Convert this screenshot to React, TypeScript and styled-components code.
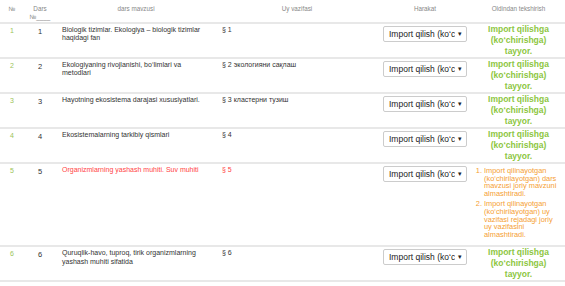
import { createGlobalStyle, styled } from "styled-components";

const GlobalStyle = createGlobalStyle`
  body {
    margin: 0;
    background: #fff;
    font-family: "Liberation Sans", Arial, sans-serif;
  }
`;

type Row = {
  id: number;
  topic: string;
  homework: string;
  warn?: boolean;
};

const rows: Row[] = [
  { id: 1, topic: "Biologik tizimlar. Ekologiya – biologik tizimlar haqidagi fan", homework: "§ 1" },
  { id: 2, topic: "Ekologiyaning rivojlanishi, bo‘limlari va metodlari", homework: "§ 2 экологияни сақлаш" },
  { id: 3, topic: "Hayotning ekosistema darajasi xususiyatlari.", homework: "§ 3 кластерни тузиш" },
  { id: 4, topic: "Ekosistemalarning tarkibiy qismlari", homework: "§ 4" },
  { id: 5, topic: "Organizmlarning yashash muhiti. Suv muhiti", homework: "§ 5", warn: true },
  { id: 6, topic: "Quruqlik-havo, tuproq, tirik organizmlarning yashash muhiti sifatida", homework: "§ 6" },
];

const App = () => {
  return (
    <>
      <GlobalStyle />
      <Table>
        <colgroup>
          <col style={{ width: 24 }} />
          <col style={{ width: 32 }} />
          <col style={{ width: 160 }} />
          <col style={{ width: 162 }} />
          <col style={{ width: 94 }} />
          <col style={{ width: 93 }} />
        </colgroup>
        <thead>
          <tr>
            <Th>№</Th>
            <Th>
              Dars
              <br />
              №____
            </Th>
            <Th>dars mavzusi</Th>
            <Th>Uy vazifasi</Th>
            <Th>Harakat</Th>
            <Th>Oldindan tekshirish</Th>
          </tr>
        </thead>
        <tbody>
          {rows.map((r) => (
            <tr key={r.id}>
              <NumCell>{r.id}</NumCell>
              <DarsCell>{r.id}</DarsCell>
              <TextCell $red={r.warn}>{r.topic}</TextCell>
              <TextCell $red={r.warn}>{r.homework}</TextCell>
              <ActionCell>
                <FakeSelect>
                  <SelectText>Import qilish (ko‘chirish)</SelectText>
                  <Arrow>▾</Arrow>
                </FakeSelect>
              </ActionCell>
              <CheckCell>
                {r.warn ? (
                  <WarnList>
                    <li>
                      Import qilinayotgan (ko‘chirilayotgan) dars mavzusi joriy
                      mavzuni almashtiradi.
                    </li>
                    <li>
                      Import qilinayotgan (ko‘chirilayotgan) uy vazifasi
                      rejadagi joriy uy vazifasini almashtiradi.
                    </li>
                  </WarnList>
                ) : (
                  <Ready>Import qilishga (ko‘chirishga) tayyor.</Ready>
                )}
              </CheckCell>
            </tr>
          ))}
        </tbody>
      </Table>
    </>
  );
};

export default App;

const Table = styled.table`
  width: 565px;
  table-layout: fixed;
  border-collapse: collapse;
  color: #333;
`;

const Th = styled.th`
  font-weight: normal;
  font-size: 6.3px;
  line-height: 7.5px;
  color: #888;
  text-align: center;
  vertical-align: top;
  padding: 5px 4px 2px;
  border-bottom: 2px solid #e8e8e8;
`;

const Td = styled.td`
  vertical-align: top;
  padding: 1px 6px 0;
  border-bottom: 2px solid #e8e8e8;
`;

const NumCell = styled(Td)`
  text-align: center;
  padding: 3px 0 0;
  font-size: 7px;
  color: #9cc45a;
`;

const DarsCell = styled(Td)`
  text-align: center;
  padding: 3px 0 0;
  font-size: 7.5px;
  color: #333;
`;

const TextCell = styled(Td)<{ $red?: boolean }>`
  font-size: 7px;
  line-height: 8.3px;
  padding-top: 2px;
  color: ${(p) => (p.$red ? "#f44" : "#333")};
`;

const ActionCell = styled(Td)`
  padding: 2px 4px 0;
`;

const FakeSelect = styled.div`
  display: flex;
  align-items: center;
  width: 84px;
  height: 16px;
  margin: 0 auto;
  box-sizing: border-box;
  border: 1px solid #ccc;
  border-radius: 2px;
  background: #fff;
  padding: 0 4px 0 5px;
  gap: 3px;
`;

const SelectText = styled.span`
  flex: 1;
  overflow: hidden;
  white-space: nowrap;
  font-size: 8.5px;
  color: #222;
`;

const Arrow = styled.span`
  font-size: 7px;
  color: #222;
`;

const CheckCell = styled(Td)`
  padding: 0 4px;
`;

const Ready = styled.div`
  text-align: center;
  font-weight: bold;
  font-size: 8.5px;
  line-height: 11px;
  color: #8dc63f;
  padding: 0 4px;
`;

const WarnList = styled.ol`
  margin: 3px 2px 7px 0;
  padding-left: 8px;
  font-size: 7.4px;
  line-height: 7.6px;
  color: #f5a033;

  li + li {
    margin-top: 3px;
  }
`;
